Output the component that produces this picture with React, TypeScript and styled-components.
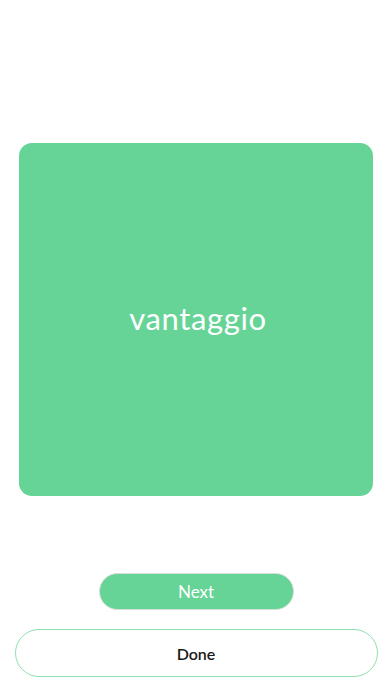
import React from 'react';
import styled, { createGlobalStyle } from 'styled-components';

const GlobalStyle = createGlobalStyle`
  html, body {
    margin: 0;
    padding: 0;
    background: #ffffff;
  }
  body {
    font-family: Lato, 'Noto Sans', sans-serif;
  }
`;

const Screen = styled.div`
  width: 392px;
  height: 696px;
  display: flex;
  flex-direction: column;
  align-items: center;
  box-sizing: border-box;
  padding-top: 143px;
`;

const Card = styled.div`
  width: 354px;
  height: 353px;
  border-radius: 13px;
  background: #66d496;
  display: flex;
  align-items: center;
  justify-content: center;
`;

const Word = styled.span`
  color: #ffffff;
  font-size: 31px;
  font-weight: 400;
  letter-spacing: 0.6px;
  padding-bottom: 3px;
  padding-left: 4px;
`;

const NextButton = styled.button`
  margin-top: 77px;
  width: 195px;
  height: 37px;
  border-radius: 19px;
  border: 1px solid #d9dfdb;
  background: #66d496;
  color: #ffffff;
  font-family: Lato, 'Noto Sans', sans-serif;
  font-size: 17px;
  font-weight: 400;
  padding: 0;
`;

const DoneButton = styled.button`
  margin-top: 19px;
  width: 363px;
  height: 48px;
  border-radius: 24px;
  border: 1px solid #8fe0b0;
  background: #ffffff;
  color: #1a1a1a;
  font-family: Lato, 'Noto Sans', sans-serif;
  font-size: 16px;
  font-weight: 600;
  padding: 0;
`;

export default function App() {
  return (
    <>
      <GlobalStyle />
      <Screen>
        <Card>
          <Word>vantaggio</Word>
        </Card>
        <NextButton>Next</NextButton>
        <DoneButton>Done</DoneButton>
      </Screen>
    </>
  );
}
